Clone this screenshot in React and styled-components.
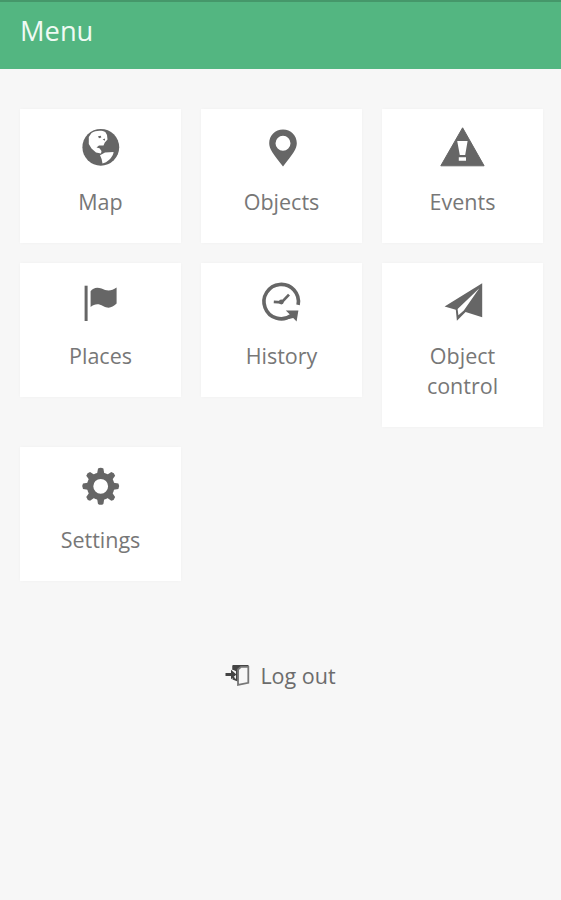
import React from "react";
import styled, { createGlobalStyle } from "styled-components";

const MapIcon = () => (
  <Icon viewBox="0 0 48 42">
    <circle cx="24.8" cy="20.3" r="18.4" />
    <path
      fill="#fff"
      d="M15.5 6 C19.5 3.4 26 3.2 29.5 5.2 L31 8 L31.5 12.5 L28.8 15.5 L27.5 18.5 L23 18.6 L20.5 20.5 L23.5 21.2 L25.5 24 L25 26.6 L20 25.5 L15.5 21.5 L12.8 17 L12.8 10 Z"
    />
    <path
      fill="#fff"
      d="M24 28.2 L29 25.6 L37.6 25 C37 29.5 33.5 33 30 35.2 L26.5 36.4 L25.6 32 Z"
    />
    <path d="M22 9.2 L24.8 8.8 L25.3 10.6 L23 11.2 Z M26.6 12.6 l2.4 -1.2 v2.4 z" />
  </Icon>
);

const PinIcon = () => (
  <Icon viewBox="0 0 48 42">
    <path
      fillRule="evenodd"
      d="M26 2.6 C18.2 2.6 12.2 8.7 12.2 16.3 C12.2 22 16 27 26 39.4 C36 27 39.8 22 39.8 16.3 C39.8 8.7 33.8 2.6 26 2.6 Z M26 8.7 a7.5 7.5 0 1 1 0 15 a7.5 7.5 0 1 1 0 -15 Z"
    />
  </Icon>
);

const WarningIcon = () => (
  <Icon viewBox="0 0 48 42">
    <path
      strokeWidth="1"
      stroke="#666"
      strokeLinejoin="round"
      d="M24.6 0.8 L46.1 38.8 H2.8 Z"
    />
    <path fill="#fff" d="M19.2 14 H29.6 L27.2 28 H21.8 Z M20.8 30.3 H28 V33.7 H20.8 Z" />
  </Icon>
);

const FlagIcon = () => (
  <Icon viewBox="0 0 48 42">
    <path d="M8.6 4.7 H11.6 V40 H8.6 Z" />
    <path d="M14.6 10.3 C17 6.8 21 5.6 25.5 7.6 C31 10.5 35.5 10.3 40.6 6.6 V22.6 C36 27.2 32 27.8 27 25 C22.5 22.4 18.5 22.8 14.6 26 Z" />
  </Icon>
);

const HistoryIcon = () => (
  <Icon viewBox="0 0 48 42">
    <path
      fill="none"
      stroke="#666"
      strokeWidth="3.6"
      d="M41.1 23.8 A17.2 17.2 0 1 0 34.3 34.5"
    />
    <path d="M28.8 29.4 L41.4 29.4 L39.6 40.5 L36.2 37 L31.8 38 L33.1 33.8 Z" />
    <path
      fill="none"
      stroke="#666"
      strokeWidth="2.7"
      d="M16.8 20.8 L24.6 21.4 L32 13.6"
    />
    <circle cx="24.3" cy="21" r="2.4" />
  </Icon>
);

const PlaneIcon = () => (
  <Icon viewBox="0 0 48 42">
    <path
      fillRule="evenodd"
      d="M44.2 2.2 L6.6 25.6 L17.8 28.8 L18.9 39.8 L27.6 31 L44.2 36.2 Z M41.3 7.2 L25.8 29.5 L20.4 34.2 L19.6 28 Z"
    />
  </Icon>
);

const GearIcon = () => (
  <Icon viewBox="0 0 48 42">
    <circle cx="24.7" cy="21.3" r="10.6" fill="none" stroke="#666" strokeWidth="6.4" />
    {[0, 45, 90, 135, 180, 225, 270, 315].map(angle => (
      <path
        key={angle}
        transform={`rotate(${angle} 24.7 21.3)`}
        d="M20.9 10 L22 3.6 Q24.7 1.9 27.4 3.6 L28.5 10 Z"
      />
    ))}
  </Icon>
);

const LogoutIcon = () => (
  <DoorIcon viewBox="0 0 26 24">
    <path d="M7.5 1 H23.5 V3 H16 L13.3 5.5 V17.8 L7.5 15.5 V13 H9.5 V14 L11 15 V5.5 L7.5 6 Z" />
    <path d="M7.5 2 L13.5 3 V8.5 L7.5 5.5 Z" />
    <path
      fill="none"
      stroke="#777"
      strokeWidth="1.8"
      d="M23.3 2 V18.8 L13 21 V5.5 L16 2.8 H23.3"
    />
    <path d="M0.5 9 H6 V5.8 L11.5 10.4 L6 15.2 V12 H0.5 Z" />
  </DoorIcon>
);

const items = [
  { label: "Map", icon: MapIcon },
  { label: "Objects", icon: PinIcon },
  { label: "Events", icon: WarningIcon },
  { label: "Places", icon: FlagIcon },
  { label: "History", icon: HistoryIcon },
  { label: "Object control", icon: PlaneIcon },
  { label: "Settings", icon: GearIcon }
];

const App = () => (
  <Page>
    <GlobalStyle />
    <Header>Menu</Header>
    <Grid>
      {items.map(({ label, icon: ItemIcon }) => (
        <Card key={label}>
          <ItemIcon />
          <Label>{label}</Label>
        </Card>
      ))}
    </Grid>
    <Logout>
      <LogoutIcon />
      <span>Log out</span>
    </Logout>
  </Page>
);
export default App;

const GlobalStyle = createGlobalStyle`
  * {
    box-sizing: border-box;
  }
  body {
    margin: 0;
    background: #f7f7f7;
    font-family: "Open Sans", "Noto Sans", sans-serif;
  }
`;

const Page = styled.div`
  min-height: 900px;
  background: #f7f7f7;
`;

const Header = styled.header`
  height: 69px;
  padding: 10px 20px 0 20px;
  border-top: 2px solid #45976a;
  background: #53b681;
  color: #effaf3;
  font-size: 27.3px;
  line-height: 38px;
`;

const Grid = styled.div`
  display: grid;
  grid-template-columns: repeat(3, 1fr);
  align-items: start;
  gap: 20px;
  padding: 40px 18px 0 20px;
`;

const Card = styled.div`
  display: flex;
  flex-direction: column;
  align-items: center;
  padding: 18px 30px 26px;
  background: #fff;
  box-shadow: 0 0 3px rgba(0, 0, 0, 0.03);
  cursor: pointer;
`;

const Icon = styled.svg`
  display: block;
  width: 48px;
  height: 42px;
  margin-right: 1px;
  fill: #666;
  overflow: visible;
`;

const Label = styled.div`
  margin-top: 18px;
  color: #777;
  font-size: 21.5px;
  line-height: 30px;
  text-align: center;
`;

const Logout = styled.div`
  display: flex;
  justify-content: center;
  align-items: center;
  gap: 9px;
  margin-top: 80px;
  color: #6c6c6c;
  font-size: 21.5px;
  line-height: 30px;
  cursor: pointer;
`;

const DoorIcon = styled.svg`
  width: 26px;
  height: 24px;
  fill: #444;
`;
